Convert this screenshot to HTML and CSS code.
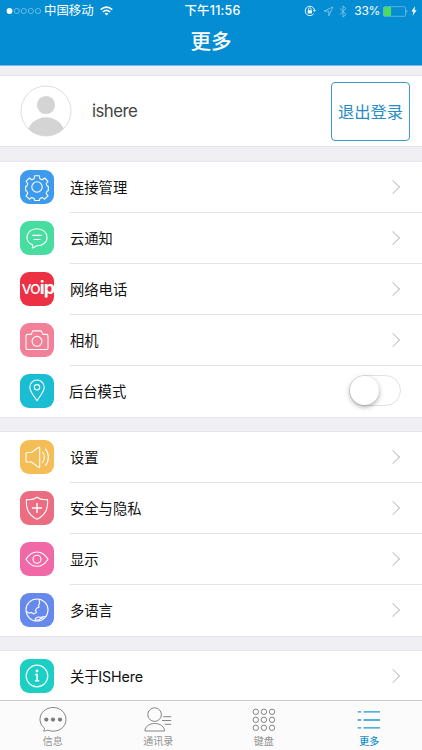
FILE: index.html
```
<!DOCTYPE html>
<html lang="zh-CN">
<head>
<meta charset="utf-8">
<title>更多</title>
<link rel="stylesheet" href="styles.css">
</head>
<body>
<div class="app">
  <header class="header">
    <div class="status">
      <div class="status-left">
        <svg class="signal" width="36" height="8" viewBox="0 0 36 8"><circle cx="3.5" cy="4" r="2.9" fill="#fff"/><g fill="none" stroke="#8ccbed" stroke-width=".7"><circle cx="10.8" cy="4" r="2.6"/><circle cx="17.8" cy="4" r="2.6"/><circle cx="24.9" cy="4" r="2.6"/><circle cx="32" cy="4" r="2.6"/></g></svg>
        <span class="carrier">中国移动</span>
        <svg class="wifi" width="13" height="10" viewBox="0 0 13 10"><g fill="none" stroke="#fff" stroke-width="1.6"><path d="M.7 3.6Q6.5-1.5 12.3 3.6"/><path d="M2.8 6Q6.5 2.7 10.2 6"/></g><path d="M4.5 7.5Q6.5 5.9 8.5 7.5L6.5 9.6z" fill="#fff"/></svg>
      </div>
      <span class="time">下午11:56</span>
      <div class="status-right">
        <svg class="lock" width="12" height="12" viewBox="0 0 12 12" fill="none" stroke="#e2f3fc"><path d="M9.7 8.7A4.7 4.7 0 1 1 10.5 5" stroke-width="1"/><path d="M8.8 5h3.1l-1.5 2z" fill="#e2f3fc" stroke="none"/><path d="M4.5 5.2V4a1.3 1.3 0 0 1 2.6 0v1.2" stroke-width=".8"/><path d="M3.7 5.2h4.2v3.2H3.7z" fill="#fff" stroke="none"/></svg>
        <svg class="arrow" width="11" height="11" viewBox="0 0 11 11"><path d="M1 5.2 9.9.9 5.8 9.8V5.2z" fill="none" stroke="#80c5e9" stroke-width=".9"/></svg>
        <svg class="bt" width="8" height="13" viewBox="0 0 8 13"><path d="m.7 3.4 6.3 6-3 2.7V.9l3 2.7-6.3 6" fill="none" stroke="#80c5e9" stroke-width=".9"/></svg>
        <span class="percent">33%</span>
        <svg class="battery" width="26" height="11" viewBox="0 0 26 11"><rect x=".5" y=".7" width="22" height="9.6" rx="1" fill="none" stroke="#64b8e4" stroke-width=".9"/><path d="M.7 1h7.4v9H.7z" fill="#4cd964"/><path d="M23.5 3.8q1.8 1.7 0 3.4z" fill="#9bd2ee"/></svg>
        <svg class="bolt" width="6" height="10" viewBox="0 0 6 10"><path d="M4 .3.4 5.5h2L1.6 9.7 5.6 4.3h-2z" fill="#fff"/></svg>
      </div>
    </div>
    <h1 class="title">更多</h1>
  </header>

  <section class="profile">
    <svg class="avatar" width="52" height="52" viewBox="0 0 52 52"><defs><clipPath id="face"><circle cx="26" cy="26" r="25"/></clipPath></defs><circle cx="26" cy="26" r="25" fill="#fff" stroke="#dedede"/><g fill="#d4d4d4" clip-path="url(#face)"><circle cx="26" cy="20" r="9.1"/><ellipse cx="26" cy="50" rx="19" ry="17.7"/></g></svg>
    <span class="name">ishere</span>
    <button class="logout">退出登录</button>
  </section>

  <section class="group">
    <div class="row">
      <svg class="icon blue" viewBox="0 0 34 34"><circle cx="17" cy="17" r="5.2"/><path d="M14.6 5.8h4.8l.5 3 2.3 1 2.5-1.8 3.3 3.3-1.8 2.5 1 2.3 1.1.3v4.4l-1.2.3-1 2.3 1.9 2.5-3.4 3.3-2.4-1.8-2.3 1-.5 2.1h-4.8l-.5-2.1-2.3-1-2.4 1.8L6 25.9l1.8-2.5-1-2.3-1.1-.3v-4.4l1.1-.3 1-2.3L6 11.3 9.4 8l2.4 1.8 2.3-1z"/></svg>
      <div class="cell"><span>连接管理</span><i class="chevron"></i></div>
    </div>
    <div class="row">
      <svg class="icon green" viewBox="0 0 34 34"><path d="M12.6 23.8C9 22.4 7 19.7 7 16.4c0-5 4.4-8.7 10-8.7s10 3.7 10 8.7-4.4 8.4-10 8.4l-4.6 2.1z"/><path d="M12.2 14.4h9.7M13.7 18.5h6.8"/></svg>
      <div class="cell"><span>云通知</span><i class="chevron"></i></div>
    </div>
    <div class="row">
      <div class="icon red"><span class="voip">vo<b>ip</b></span></div>
      <div class="cell"><span>网络电话</span><i class="chevron"></i></div>
    </div>
    <div class="row">
      <svg class="icon rose" viewBox="0 0 34 34"><path d="M7.5 11.4h3.8l1.4-3.5h8.6l1.5 3.5h3.8q1.4 0 1.4 1.5v12.2q0 1.4-1.4 1.4H7.4Q6 26.5 6 25.1V12.9q0-1.5 1.5-1.5z"/><circle cx="17" cy="18.3" r="4.9"/></svg>
      <div class="cell"><span>相机</span><i class="chevron"></i></div>
    </div>
    <div class="row">
      <svg class="icon cyan" viewBox="0 0 34 34"><path d="M17 26.7C13.8 21.8 9.8 17.6 9.8 13.2a7.2 7.2 0 0 1 14.4 0c0 4.4-4 8.6-7.2 13.5z"/><circle cx="17" cy="13.3" r="2.7"/></svg>
      <div class="cell"><span class="shifted">后台模式</span><span class="switch"><span class="knob"></span></span></div>
    </div>
  </section>

  <section class="group">
    <div class="row">
      <svg class="icon yellow" viewBox="0 0 34 34"><path d="M7 12.5h4.4l7.3-5.3q1-.5 1 .7v18.8q0 1.2-1 .7L11.4 22H7q-1 0-1-1v-7.4q0-1.1 1-1.1z"/><path d="M22.4 11.8c2.6 3 2.6 8 0 11M25.2 8.6c4.2 5 4.2 12.2 0 17.2"/></svg>
      <div class="cell"><span>设置</span><i class="chevron"></i></div>
    </div>
    <div class="row">
      <svg class="icon coral" viewBox="0 0 34 34"><path d="M17 6.3c2.6 2 6 2.7 10.5 2.3.9 8.6-2.4 15.9-10.5 19.6C8.9 24.5 5.6 17.2 6.5 8.6 11 9 14.4 8.3 17 6.3z"/><path d="M17 12v10M12 17h10" stroke-width="1.4"/></svg>
      <div class="cell"><span>安全与隐私</span><i class="chevron"></i></div>
    </div>
    <div class="row">
      <svg class="icon pink" viewBox="0 0 34 34"><path d="M6 17.2Q10.6 10 17 10t11 7.2q-4.6 7.1-11 7.1T6 17.2z"/><circle cx="17" cy="17.2" r="4"/></svg>
      <div class="cell"><span>显示</span><i class="chevron"></i></div>
    </div>
    <div class="row">
      <svg class="icon indigo" viewBox="0 0 34 34"><circle cx="17" cy="17" r="11"/><path d="m18.8 6.2.9 3.6-1.3 2.6.8 1.6-2.6 1.2-1.2 2.3 1.2 1.8-2.7 1.6-2.6-1.4-2.2.6-2.5-1.6M15.2 27.3c-.2-2.6 2.3-3.7 5-3.1 1.6.4 3.4-1.4 4.9-.2M15.2 27.5c3.4-.2 5.5-1.6 7.6-2.9"/></svg>
      <div class="cell"><span>多语言</span><i class="chevron"></i></div>
    </div>
  </section>

  <section class="group last">
    <div class="row">
      <svg class="icon teal" viewBox="0 0 34 34"><circle cx="17" cy="17" r="10.8" stroke-width="1.2"/><circle cx="17" cy="12" r="1.4" fill="#fff" stroke="none"/><path d="M15 15.5h2.1v6.2m-2.1 0h4.2" stroke-width="1.6"/></svg>
      <div class="cell"><span class="about">关于ISHere</span><i class="chevron"></i></div>
    </div>
  </section>

  <nav class="tabs">
    <div class="tab">
      <svg width="28" height="28" viewBox="0 0 28 28"><path d="M5.4 23C2.5 20.8 1 18 1 14.4 1 8 6.5 2.5 14 2.5s13 5.5 13 12-5.5 11.7-13 11.7c-2.2 0-3.7-.4-5.4-1.1-1.3.8-2.7 1-4.3.9 1-1 1.3-1.8 1.1-3z"/><g fill="#7c7c7c" stroke="none"><circle cx="7.3" cy="14.6" r="2.1"/><circle cx="14" cy="14.6" r="2.1"/><circle cx="21" cy="14.6" r="2.1"/></g></svg>
      <span>信息</span>
    </div>
    <div class="tab">
      <svg width="28" height="28" viewBox="0 0 28 28"><circle cx="10.6" cy="9.6" r="6.8"/><path d="M.9 26c0-4.3 4.2-7.5 9.8-7.5s9.9 3.2 9.9 7.5zM19.3 11.7h7.9M18 15.5h9.2M20.8 19.3h6.4"/></svg>
      <span>通讯录</span>
    </div>
    <div class="tab">
      <svg width="28" height="28" viewBox="0 0 28 28"><circle cx="5.8" cy="6.8" r="2.7"/><circle cx="13.9" cy="6.8" r="2.7"/><circle cx="22" cy="6.8" r="2.7"/><circle cx="5.8" cy="14.8" r="2.7"/><circle cx="13.9" cy="14.8" r="2.7"/><circle cx="22" cy="14.8" r="2.7"/><circle cx="5.8" cy="22.8" r="2.7"/><circle cx="13.9" cy="22.8" r="2.7"/><circle cx="22" cy="22.8" r="2.7"/></svg>
      <span>键盘</span>
    </div>
    <div class="tab active">
      <svg width="28" height="28" viewBox="0 0 28 28"><path d="M2.7 6.9h3.4M8.6 6.9H25M2.7 15h3.4M8.6 15H25M2.7 22.9h3.4M8.6 22.9H25" stroke-width="1.4"/></svg>
      <span>更多</span>
    </div>
  </nav>
</div>
</body>
</html>
```
FILE: styles.css
```
* { box-sizing: border-box; }
body {
  margin: 0;
  background: #efeff4;
  color: #111;
  font-family: Inter, "Noto Sans CJK SC", sans-serif;
}
.app {
  width: 422px;
  height: 750px;
  display: flex;
  flex-direction: column;
  overflow: hidden;
}
.header {
  height: 66px;
  flex: none;
  background: #048dd2;
  border-bottom: 1px solid #75bce7;
  color: #fff;
}
.status {
  height: 22px;
  display: grid;
  grid-template-columns: 1fr auto 1fr;
  align-items: center;
  font-size: 12px;
  line-height: 22px;
}
.status svg { display: block; flex: none; }
.status-left { display: flex; align-items: center; padding-left: 6px; }
.carrier { margin-left: 2px; font-size: 12.4px; }
.wifi { margin-left: 6px; }
.time { margin-left: 3px; font-weight: 500; font-size: 12.4px; letter-spacing: .25px; }
.status-right {
  display: flex;
  align-items: center;
  justify-content: flex-end;
  padding-right: 5px;
}
.arrow { margin-left: 7px; }
.bt { margin-left: 5px; }
.percent { margin-left: 7px; letter-spacing: -.3px; }
.battery { margin-left: 3px; }
.bolt { margin-left: 2px; }
.title {
  margin: 5px 0 0;
  text-align: center;
  font-size: 20.5px;
  line-height: 30px;
  font-weight: 500;
}
.profile {
  height: 72px;
  flex: none;
  margin-top: 9px;
  padding: 0 12px 0 20px;
  display: flex;
  align-items: center;
  background: #fff;
  border-top: 1px solid #e4e4e8;
  border-bottom: 1px solid #e4e4e8;
}
.name {
  margin-left: 20px;
  font-size: 16.8px;
  font-weight: 400;
  color: #444;
  letter-spacing: -.55px;
}
.logout {
  width: 79px;
  height: 59px;
  margin-left: auto;
  padding: 0;
  background: #fff;
  border: 1px solid #3a9bcc;
  border-radius: 4px;
  color: #288dc5;
  font-family: inherit;
  font-size: 16.3px;
}
.group {
  flex: none;
  margin-top: 15px;
  background: #fff;
  box-shadow: 0 -1px #e5e5ea, 0 1px #e5e5ea;
}
.row {
  height: 51px;
  padding-left: 20px;
  display: flex;
  align-items: center;
}
.icon {
  width: 34px;
  height: 34px;
  flex: none;
  margin-bottom: 2px;
  border-radius: 9px;
  fill: none;
  stroke: #fff;
  stroke-width: 1.1;
  stroke-linejoin: round;
}
.blue { background: #3d9aec; }
.green { background: #48dda0; }
.red { background: #ec3144; }
.rose { background: #f38099; }
.cyan { background: #1bbdd2; }
.yellow { background: #f5bd55; }
.coral { background: #ec6c81; }
.pink { background: #f168a7; }
.indigo { background: #6689ee; }
.teal { background: #1bd0c3; }
.voip {
  display: block;
  padding-left: 1.5px;
  color: #fff;
  font-size: 18px;
  line-height: 32px;
  white-space: nowrap;
  font-weight: 400;
  letter-spacing: -1.2px;
}
.voip b { font-weight: 700; letter-spacing: -.9px; }
.cell {
  flex: 1;
  align-self: stretch;
  margin-left: 16px;
  padding: 0 21px 2px 0;
  display: flex;
  align-items: center;
  justify-content: space-between;
  border-bottom: 1px solid #e3e3e5;
  font-size: 14.3px;
}
.row:last-child .cell { border-bottom-color: transparent; }
.shifted { margin-left: -1px; }
.about { letter-spacing: -.15px; }
.chevron {
  width: 10px;
  height: 10px;
  margin: 1px 3px 0 0;
  border: solid #c3c3c9;
  border-width: 1.8px 1.8px 0 0;
  transform: rotate(45deg);
}
.switch {
  width: 52px;
  height: 31px;
  border: 1.5px solid #e2e2e2;
  border-radius: 16px;
}
.knob {
  display: block;
  width: 29px;
  height: 29px;
  border-radius: 50%;
  background: #fff;
  box-shadow: 0 2px 4px rgba(0,0,0,.28), 0 1px 9px rgba(0,0,0,.08);
}
.last { height: 49px; }
.last .row { height: 52px; }
.tabs {
  height: 50px;
  flex: none;
  display: grid;
  grid-template-columns: repeat(4, 1fr);
  background: #fbfbfb;
  border-top: 1px solid #c9c9cb;
  z-index: 1;
}
.tab {
  display: flex;
  flex-direction: column;
  align-items: center;
  padding-top: 4px;
  color: #929292;
  font-size: 10px;
  line-height: 17px;
}
.tab svg { fill: none; stroke: #858585; stroke-width: 1; }
.active { color: #168fca; font-weight: 500; }
.active svg { stroke: #1d99d0; }
```
